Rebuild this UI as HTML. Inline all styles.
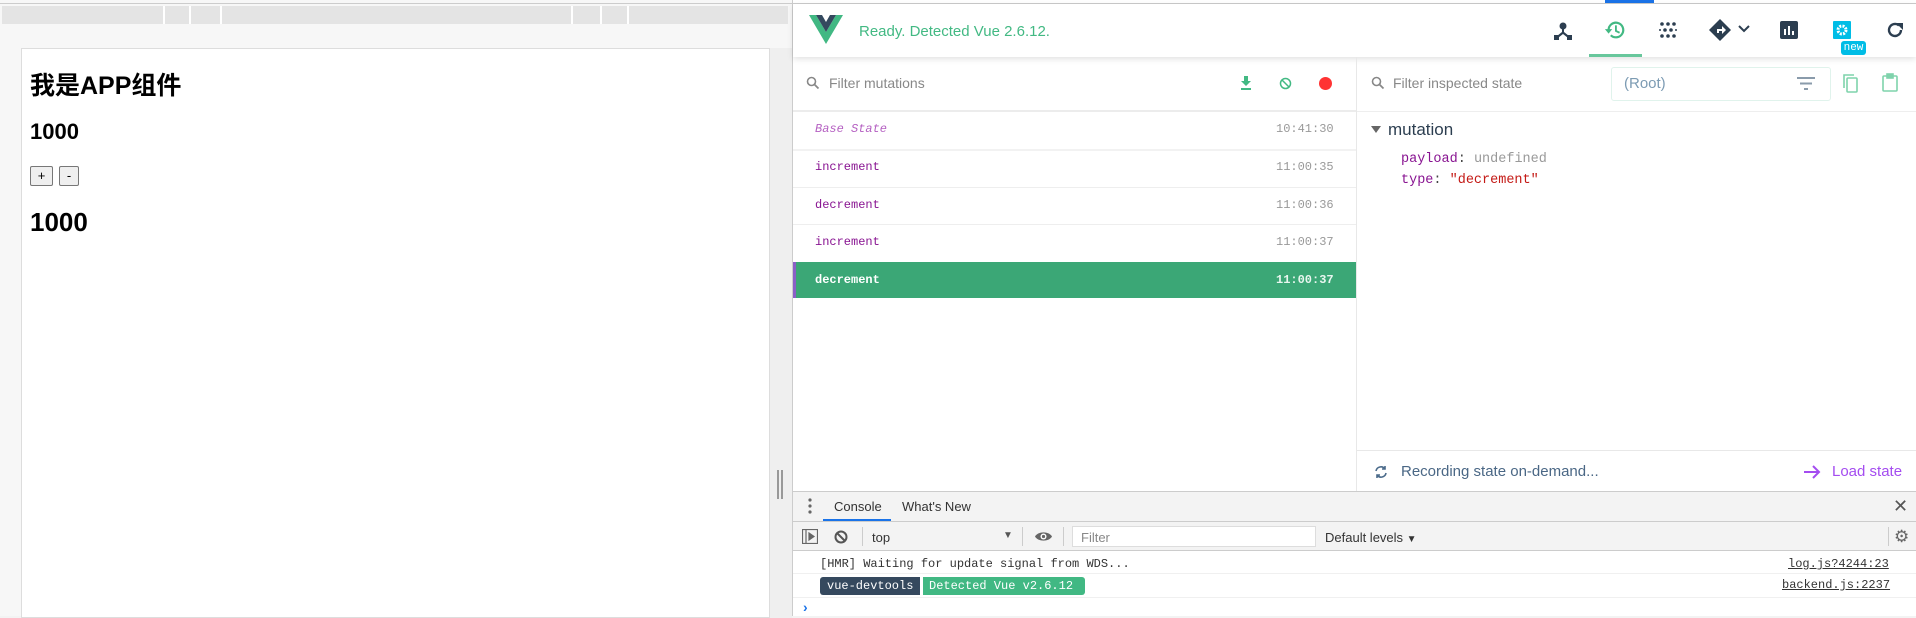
<!DOCTYPE html>
<html><head><meta charset="utf-8"><style>
*{box-sizing:border-box;margin:0;padding:0}
body{width:1916px;height:616px;overflow:hidden;position:relative;background:#f3f3f3;font-family:"Liberation Sans","Noto Sans CJK SC",sans-serif}
.a{position:absolute}
.mono{font-family:"Liberation Mono","DejaVu Sans Mono",monospace}
</style></head><body>
<div class="a" style="left:0;top:0;width:792px;height:616px;background:#f7f7f7"></div>
<div class="a" style="left:0;top:3px;width:792px;height:1px;background:#ccc"></div>
<div class="a" style="left:2px;top:6px;width:786px;height:18px;background:#e4e4e4"></div>
<div class="a" style="left:163px;top:6px;width:2px;height:18px;background:#fff"></div>
<div class="a" style="left:189px;top:6px;width:2px;height:18px;background:#fff"></div>
<div class="a" style="left:220px;top:6px;width:2px;height:18px;background:#fff"></div>
<div class="a" style="left:571px;top:6px;width:2px;height:18px;background:#fff"></div>
<div class="a" style="left:600px;top:6px;width:2px;height:18px;background:#fff"></div>
<div class="a" style="left:627px;top:6px;width:2px;height:18px;background:#fff"></div>
<div class="a" style="left:21px;top:48px;width:749px;height:570px;background:#fff;border:1px solid #ddd"></div>
<div class="a" style="left:770px;top:48px;width:22px;height:570px;background:#efefef"></div>
<div class="a" style="left:777px;top:470px;width:2px;height:29px;background:#999"></div>
<div class="a" style="left:781px;top:470px;width:2px;height:29px;background:#999"></div>
<div class="a" style="left:30px;top:70px;font-size:25px;font-weight:bold;line-height:32px">我是APP组件</div>
<div class="a" style="left:30px;top:119px;font-size:22px;font-weight:bold;line-height:26px">1000</div>
<div class="a" style="left:30px;top:166px;width:23px;height:20px;border:1px solid #777;border-radius:2px;background:#efefef;font-size:13px;text-align:center;line-height:18px">+</div>
<div class="a" style="left:59px;top:166px;width:20px;height:20px;border:1px solid #777;border-radius:2px;background:#efefef;font-size:13px;text-align:center;line-height:18px">-</div>
<div class="a" style="left:30px;top:207px;font-size:26px;font-weight:bold;line-height:30px">1000</div>

<div class="a" style="left:792px;top:0;width:1124px;height:491px;background:#fff;border-left:1px solid #ccc"></div>
<div class="a" style="left:792px;top:3px;width:1124px;height:1px;background:#ccc"></div>
<div class="a" style="left:1605px;top:0;width:49px;height:3px;background:#1a73e8"></div>
<div class="a" style="left:793px;top:4px;width:1123px;height:53px;background:#fff;box-shadow:0 2px 6px rgba(0,0,0,.12)"></div>
<svg class="a" style="left:809px;top:15px" width="34" height="29" viewBox="0 0 34 29"><path d="M0 0h7l10 17 10-17h7L17 29z" fill="#41b883"/><path d="M7 0h6l4 7 4-7h6L17 17z" fill="#34495e"/></svg>
<div class="a" style="left:859px;top:23px;font-size:15px;color:#42b983">Ready. Detected Vue 2.6.12.</div>
<svg class="a" style="left:1553px;top:21px" width="20" height="20" viewBox="0 0 20 20" fill="#2c3e50"><circle cx="10" cy="5" r="3.5"/><path d="M9 7h2v4l5 4-1.4 1.6L10 13l-4.6 3.6L4 15l5-4z"/><rect x="1" y="14" width="5" height="5"/><rect x="14" y="14" width="5" height="5"/></svg>
<svg class="a" style="left:1604px;top:19px" width="22" height="22" viewBox="0 0 24 24"><path d="M5 12a8 8 0 1 1 2.4 5.7" fill="none" stroke="#42b983" stroke-width="2.4"/><path d="M1 11h8l-4 5z" fill="#42b983"/><path d="M13 7v6l4 2" fill="none" stroke="#42b983" stroke-width="2"/></svg>
<div class="a" style="left:1589px;top:54px;width:53px;height:3px;background:#42b983;opacity:.8"></div>
<svg class="a" style="left:1659px;top:21px" width="18" height="18" viewBox="0 0 18 18" fill="#2c3e50"><circle cx="3" cy="3" r="1.8"/><circle cx="9" cy="3" r="1.8"/><circle cx="15" cy="3" r="1.8"/><circle cx="6" cy="9" r="1.8"/><circle cx="12" cy="9" r="1.8"/><circle cx="3" cy="15" r="1.8"/><circle cx="9" cy="15" r="1.8"/><circle cx="15" cy="15" r="1.8"/><circle cx="1" cy="9" r="1"/><circle cx="17" cy="9" r="1"/></svg>
<svg class="a" style="left:1709px;top:19px" width="22" height="22" viewBox="0 0 22 22"><path d="M11 0l11 11-11 11L0 11z" fill="#2c3e50"/><path d="M8 14v-4h5V7l4 4-4 4v-3h-3v2z" fill="#fff"/></svg>
<svg class="a" style="left:1738px;top:25px" width="12" height="8" viewBox="0 0 12 8"><path d="M1 1l5 5 5-5" fill="none" stroke="#2c3e50" stroke-width="2"/></svg>
<svg class="a" style="left:1780px;top:21px" width="18" height="18" viewBox="0 0 18 18"><rect width="18" height="18" rx="2" fill="#2c3e50"/><rect x="4" y="8" width="2" height="6" fill="#fff"/><rect x="8" y="5" width="2" height="9" fill="#fff"/><rect x="12" y="10" width="2" height="4" fill="#fff"/></svg>
<svg class="a" style="left:1833px;top:21px" width="18" height="18" viewBox="0 0 18 18"><rect width="18" height="18" rx="1" fill="#00bde6"/><circle cx="9" cy="9" r="4" fill="none" stroke="#fff" stroke-width="3" stroke-dasharray="2 1.2"/><circle cx="9" cy="9" r="1.5" fill="#00bde6"/></svg>
<div class="a mono" style="left:1841px;top:41px;width:25px;height:14px;background:#00bde6;color:#fff;font-size:11px;line-height:14px;text-align:center;border-radius:3px">new</div>
<svg class="a" style="left:1885px;top:20px" width="20" height="20" viewBox="0 0 20 20"><path d="M16 10a6 6 0 1 1-2-4.5" fill="none" stroke="#2c3e50" stroke-width="2.4"/><path d="M11 3h7v7z" fill="#2c3e50"/></svg>

<svg class="a" style="left:806px;top:76px" width="14" height="14" viewBox="0 0 14 14"><circle cx="5.5" cy="5.5" r="4" fill="none" stroke="#888" stroke-width="1.6"/><path d="M8.5 8.5l4 4" stroke="#888" stroke-width="1.8"/></svg>
<div class="a" style="left:829px;top:75px;font-size:14px;color:#888">Filter mutations</div>
<svg class="a" style="left:1240px;top:76px" width="12" height="14" viewBox="0 0 12 14" fill="#42b983"><path d="M4 0h4v5h3L6 10 1 5h3z"/><rect x="1" y="12" width="10" height="2"/></svg>
<svg class="a" style="left:1279px;top:77px" width="13" height="13" viewBox="0 0 13 13"><circle cx="6.5" cy="6.5" r="5" fill="none" stroke="#42b983" stroke-width="1.5"/><path d="M3 3l7 7" stroke="#42b983" stroke-width="1.5"/></svg>
<div class="a" style="left:1319px;top:77px;width:13px;height:13px;border-radius:50%;background:#f33"></div>
<div class="a" style="left:793px;top:110px;width:563px;height:2px;background:#ececec"></div>
<div class="a" style="left:1356px;top:57px;width:1px;height:434px;background:#e8e8e8"></div>
<div class="a mono" style="left:815px;top:122px;font-size:12px;color:#b561c2;font-style:italic">Base State</div>
<div class="a mono" style="left:1276px;top:122px;font-size:12px;color:#999">10:41:30</div>
<div class="a" style="left:793px;top:149px;width:563px;height:2px;background:#f2f2f2"></div>
<div class="a mono" style="left:815px;top:160px;font-size:12px;color:#881391">increment</div>
<div class="a mono" style="left:1276px;top:160px;font-size:12px;color:#999">11:00:35</div>
<div class="a" style="left:793px;top:187px;width:563px;height:1px;background:#eee"></div>
<div class="a mono" style="left:815px;top:198px;font-size:12px;color:#881391">decrement</div>
<div class="a mono" style="left:1276px;top:198px;font-size:12px;color:#999">11:00:36</div>
<div class="a" style="left:793px;top:224px;width:563px;height:1px;background:#eee"></div>
<div class="a mono" style="left:815px;top:235px;font-size:12px;color:#881391">increment</div>
<div class="a mono" style="left:1276px;top:235px;font-size:12px;color:#999">11:00:37</div>
<div class="a" style="left:793px;top:262px;width:563px;height:36px;background:#3ba776;border-left:3px solid #8a5fc7"></div>
<div class="a mono" style="left:815px;top:273px;font-size:12px;color:#fff;font-weight:bold">decrement</div>
<div class="a mono" style="left:1276px;top:273px;font-size:12px;color:#e8f6ef;font-weight:bold">11:00:37</div>

<svg class="a" style="left:1371px;top:76px" width="14" height="14" viewBox="0 0 14 14"><circle cx="5.5" cy="5.5" r="4" fill="none" stroke="#888" stroke-width="1.6"/><path d="M8.5 8.5l4 4" stroke="#888" stroke-width="1.8"/></svg>
<div class="a" style="left:1393px;top:75px;font-size:14px;color:#888">Filter inspected state</div>
<div class="a" style="left:1611px;top:67px;width:220px;height:34px;border:1px solid #e0f3ec;border-radius:3px"></div>
<div class="a" style="left:1624px;top:75px;font-size:15px;color:#7c9bb3">(Root)</div>
<svg class="a" style="left:1797px;top:77px" width="18" height="13" viewBox="0 0 18 13" fill="#8a9bab"><rect width="18" height="2"/><rect x="3" y="5.5" width="12" height="2"/><rect x="7" y="11" width="4" height="2"/></svg>
<svg class="a" style="left:1843px;top:74px" width="16" height="19" viewBox="0 0 16 19" fill="none" stroke="#7fd3ac" stroke-width="1.6"><path d="M1 14V1h10"/><rect x="4" y="4" width="10" height="14" rx="1"/></svg>
<svg class="a" style="left:1882px;top:73px" width="16" height="19" viewBox="0 0 16 19" fill="none" stroke="#7fd3ac" stroke-width="1.6"><rect x="1" y="3" width="14" height="15" rx="1"/><rect x="5" y="1" width="6" height="4" fill="#7fd3ac"/></svg>
<div class="a" style="left:1357px;top:111px;width:559px;height:1px;background:#eee"></div>
<svg class="a" style="left:1371px;top:126px" width="10" height="8"><path d="M0 0h10L5 7z" fill="#666"/></svg>
<div class="a" style="left:1388px;top:120px;font-size:17px;color:#2c3e50">mutation</div>
<div class="a mono" style="left:1401px;top:152px;font-size:13.5px;color:#881391">payload<span style="color:#444">:</span> <span style="color:#999">undefined</span></div>
<div class="a mono" style="left:1401px;top:173px;font-size:13.5px;color:#881391">type<span style="color:#444">:</span> <span style="color:#c41a16">"decrement"</span></div>
<div class="a" style="left:1357px;top:450px;width:559px;height:1px;background:#e8e8e8"></div>
<svg class="a" style="left:1374px;top:465px" width="14" height="14" viewBox="0 0 14 14" fill="none" stroke="#4a6a8a" stroke-width="1.6"><path d="M2 6a5 5 0 0 1 9-2"/><path d="M12 8a5 5 0 0 1-9 2"/><path d="M11 1v3H8" /><path d="M3 13v-3h3"/></svg>
<div class="a" style="left:1401px;top:463px;font-size:15px;color:#4a6785">Recording state on-demand...</div>
<svg class="a" style="left:1803px;top:463px" width="18" height="18" viewBox="0 0 18 18" fill="none" stroke="#a44cf0" stroke-width="2"><path d="M1 9h15M10 3l6 6-6 6"/></svg>
<div class="a" style="left:1832px;top:463px;font-size:15px;color:#a44cf0">Load state</div>

<div class="a" style="left:792px;top:491px;width:1124px;height:125px;background:#fff;border-left:1px solid #ccc"></div>
<div class="a" style="left:793px;top:491px;width:1123px;height:31px;background:#f3f3f3;border-top:1px solid #ccc;border-bottom:1px solid #ccc"></div>
<svg class="a" style="left:808px;top:498px" width="4" height="16" fill="#666"><circle cx="2" cy="2" r="1.6"/><circle cx="2" cy="8" r="1.6"/><circle cx="2" cy="14" r="1.6"/></svg>
<div class="a" style="left:834px;top:499px;font-size:13px;color:#333">Console</div>
<div class="a" style="left:823px;top:519px;width:68px;height:2px;background:#1a73e8"></div>
<div class="a" style="left:902px;top:499px;font-size:13px;color:#333">What's New</div>
<div class="a" style="left:1893px;top:496px;font-size:18px;color:#555">✕</div>
<div class="a" style="left:793px;top:522px;width:1123px;height:29px;background:#f3f3f3;border-bottom:1px solid #ccc"></div>
<svg class="a" style="left:802px;top:529px" width="16" height="15" viewBox="0 0 16 15" fill="none" stroke="#666" stroke-width="1.2"><rect x=".5" y=".5" width="15" height="14"/><path d="M4 1v13"/><path d="M7 4l5 3.5-5 3.5z" fill="#666"/></svg>
<svg class="a" style="left:834px;top:530px" width="14" height="14" viewBox="0 0 14 14" fill="none" stroke="#555" stroke-width="2"><circle cx="7" cy="7" r="5.5"/><path d="M3 3l8 8"/></svg>
<div class="a" style="left:862px;top:527px;width:1px;height:19px;background:#ccc"></div>
<div class="a" style="left:872px;top:530px;font-size:13px;color:#333">top</div>
<div class="a" style="left:1003px;top:530px;font-size:10px;color:#555">▼</div>
<div class="a" style="left:1022px;top:527px;width:1px;height:19px;background:#ccc"></div>
<svg class="a" style="left:1035px;top:531px" width="17" height="11" viewBox="0 0 17 11"><path d="M0 5.5C3 0 14 0 17 5.5 14 11 3 11 0 5.5z" fill="#666"/><circle cx="8.5" cy="5.5" r="3" fill="#fff"/><circle cx="8.5" cy="5.5" r="1.6" fill="#666"/></svg>
<div class="a" style="left:1063px;top:527px;width:1px;height:19px;background:#ccc"></div>
<div class="a" style="left:1072px;top:526px;width:244px;height:21px;background:#fff;border:1px solid #ddd"></div>
<div class="a" style="left:1081px;top:530px;font-size:13px;color:#888">Filter</div>
<div class="a" style="left:1325px;top:530px;font-size:13px;color:#333">Default levels <span style="font-size:10px">▼</span></div>
<div class="a" style="left:1888px;top:527px;width:1px;height:19px;background:#ccc"></div>
<div class="a" style="left:1894px;top:527px;font-size:17px;color:#666">⚙</div>
<div class="a mono" style="left:820px;top:557px;font-size:12px;color:#333">[HMR] Waiting for update signal from WDS...</div>
<div class="a mono" style="left:1788px;top:557px;font-size:12px;color:#333;text-decoration:underline">log.js?4244:23</div>
<div class="a" style="left:793px;top:573px;width:1123px;height:1px;background:#f0f0f0"></div>
<div class="a mono" style="left:820px;top:577px;height:18px;line-height:18px;font-size:12px;color:#fff;background:#35495e;padding:0 7px;border-radius:3px 0 0 3px">vue-devtools</div>
<div class="a mono" style="left:923px;top:577px;width:162px;height:18px;line-height:18px;font-size:12px;color:#fff;background:#41b883;padding:0 6px;border-radius:0 3px 3px 0">Detected Vue v2.6.12</div>
<div class="a mono" style="left:1782px;top:578px;font-size:12px;color:#333;text-decoration:underline">backend.js:2237</div>
<div class="a" style="left:793px;top:597px;width:1123px;height:1px;background:#f0f0f0"></div>
<div class="a" style="left:803px;top:599px;font-size:14px;color:#1a73e8;font-weight:bold">›</div>
</body></html>
